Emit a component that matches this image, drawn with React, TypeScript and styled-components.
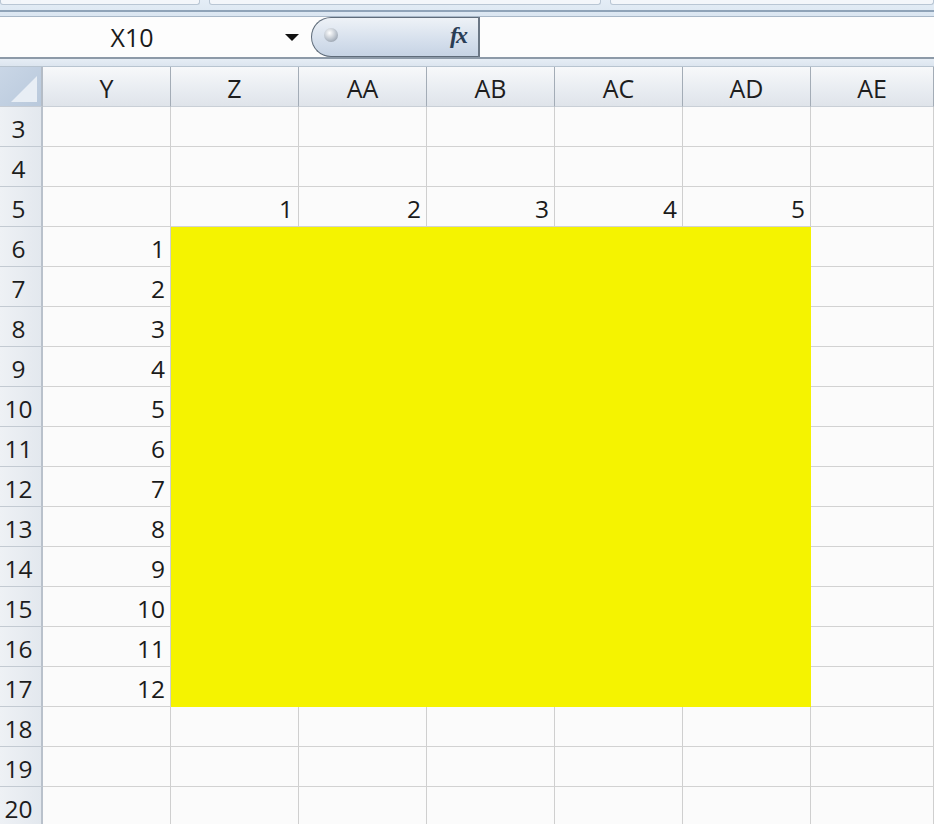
import React from "react";
import styled, { createGlobalStyle } from "styled-components";

const GlobalStyle = createGlobalStyle`
  html, body { margin: 0; padding: 0; background: #ffffff; }
  body { font-family: "Open Sans", "Liberation Sans", sans-serif; overflow: hidden; }
`;

const Page = styled.div`
  width: 934px;
  height: 824px;
  overflow: hidden;
  background: #fbfbfb;
  display: flex;
  flex-direction: column;
`;

const Ribbon = styled.div`
  flex-shrink: 0;
  height: 17px;
  display: flex;
  flex-direction: column;
  background: linear-gradient(#e4edf6, #dbe6f1);
  border-bottom: 1px solid #a9b8c8;
  box-sizing: border-box;
`;

const TabRow = styled.div`
  height: 5px;
  display: flex;
  gap: 9px;
`;

const TabStub = styled.div<{ $w: number }>`
  width: ${(p) => p.$w}px;
  flex: ${(p) => (p.$w === 0 ? 1 : "none")};
  height: 4px;
  background: #f3f6fa;
  border: 1px solid #b9c6d4;
  border-top: none;
  border-radius: 0 0 3px 3px;
`;

const RibbonLine = styled.div`
  margin-top: 5px;
  height: 2px;
  background: #8fa3b8;
`;

const FormulaBar = styled.div`
  flex-shrink: 0;
  height: 42px;
  display: flex;
  background: #fdfdfd;
  border-bottom: 2px solid #8d9aa8;
  box-sizing: border-box;
`;

const NameBox = styled.div`
  width: 311px;
  display: flex;
  align-items: center;
  box-sizing: border-box;
`;

const NameText = styled.span`
  width: 264px;
  text-align: center;
  font-size: 25px;
  color: #1a1a1a;
`;

const DropArrow = styled.span`
  width: 0;
  height: 0;
  border-left: 7px solid transparent;
  border-right: 7px solid transparent;
  border-top: 7px solid #111;
  margin-left: 21px;
`;

const FxPill = styled.div`
  width: 167px;
  height: 40px;
  box-sizing: border-box;
  border: 1px solid #5f6c7a;
  border-right: none;
  border-radius: 20px 0 0 20px;
  background: linear-gradient(#eef2f7, #d5dfec 60%, #c6d3e4);
  display: flex;
  align-items: center;
  justify-content: space-between;
  padding: 0 12px 0 12px;
`;

const Knob = styled.span`
  width: 14px;
  height: 14px;
  border-radius: 50%;
  margin-top: -4px;
  background: radial-gradient(circle at 40% 35%, #ffffff, #b9c1cb 55%, #7e8996);
`;

const FxLabel = styled.span`
  font-family: "Liberation Serif", "DejaVu Serif", serif;
  font-style: italic;
  font-weight: bold;
  font-size: 24px;
  color: #2a3d55;
  letter-spacing: -2px;
  margin-top: -4px;
`;

const FormulaInput = styled.div`
  flex: 1;
  border-left: 2px solid #6b7785;
  background: #fdfdfd;
`;

const Gap = styled.div`
  flex-shrink: 0;
  height: 8px;
  background: linear-gradient(#e6edf5, #dce5ef);
  border-bottom: 1px solid #b8c4d0;
  box-sizing: border-box;
`;

const Grid = styled.div`
  flex-shrink: 0;
  display: grid;
  grid-template-columns: 43px repeat(6, 128px) 1fr;
  grid-auto-rows: 40px;
`;

const Corner = styled.div`
  position: relative;
  box-sizing: border-box;
  border-right: 2px solid #b4bcc6;
  border-bottom: 1px solid #c6ccd4;
  background: linear-gradient(135deg, #c9d6e6, #b9c9dc);
  overflow: hidden;
`;

const CornerTriangle = styled.span`
  position: absolute;
  right: 4px;
  bottom: 4px;
  width: 0;
  height: 0;
  border-left: 26px solid transparent;
  border-bottom: 26px solid #e8eef5;
`;

const ColHead = styled.div`
  box-sizing: border-box;
  border-right: 1px solid #a3acb6;
  border-bottom: 1px solid #c9cfd6;
  background: linear-gradient(#f7f8fa, #e8ecf1 60%, #dfe4ea);
  display: flex;
  align-items: center;
  justify-content: center;
  font-size: 25px;
  color: #1d1d1d;
  padding-top: 3px;
`;

const RowHead = styled.div`
  box-sizing: border-box;
  border-right: 2px solid #b9c1cb;
  border-bottom: 1px solid #c3cad2;
  background: linear-gradient(90deg, #eef1f5, #e3e8ee);
  display: flex;
  align-items: center;
  justify-content: center;
  padding-right: 4px;
  padding-top: 4px;
  font-size: 24.5px;
  color: #1d1d1d;
`;

const Cell = styled.div<{ $fill?: boolean }>`
  box-sizing: border-box;
  border-right: 1px solid ${(p) => (p.$fill ? "#f5f300" : "#cfcfcf")};
  border-bottom: 1px solid ${(p) => (p.$fill ? "#f5f300" : "#d2d2d2")};
  background: ${(p) => (p.$fill ? "#f5f300" : "#fbfbfb")};
  display: flex;
  align-items: flex-end;
  justify-content: flex-end;
  padding: 0 5px 5px 0;
  font-size: 24.5px;
  line-height: 1;
  color: #1a1a1a;
`;

const columns = ["Y", "Z", "AA", "AB", "AC", "AD", "AE"];
const rows = Array.from({ length: 18 }, (_, i) => i + 3);

function cellValue(row: number, col: number): string {
  if (row === 5 && col >= 1 && col <= 5) return String(col);
  if (col === 0 && row >= 6 && row <= 17) return String(row - 5);
  return "";
}

function isFilled(row: number, col: number): boolean {
  return row >= 6 && row <= 17 && col >= 1 && col <= 5;
}

export default function App() {
  return (
    <Page>
      <GlobalStyle />
      <Ribbon>
        <TabRow>
          <TabStub $w={198} />
          <TabStub $w={390} />
          <TabStub $w={0} />
        </TabRow>
        <RibbonLine />
      </Ribbon>
      <FormulaBar>
        <NameBox>
          <NameText>X10</NameText>
          <DropArrow />
        </NameBox>
        <FxPill>
          <Knob />
          <FxLabel>fx</FxLabel>
        </FxPill>
        <FormulaInput />
      </FormulaBar>
      <Gap />
      <Grid>
        <Corner>
          <CornerTriangle />
        </Corner>
        {columns.map((c) => (
          <ColHead key={c}>{c}</ColHead>
        ))}
        {rows.map((r) => (
          <React.Fragment key={r}>
            <RowHead>{r}</RowHead>
            {columns.map((c, ci) => (
              <Cell key={c} $fill={isFilled(r, ci)}>
                {cellValue(r, ci)}
              </Cell>
            ))}
          </React.Fragment>
        ))}
      </Grid>
    </Page>
  );
}
